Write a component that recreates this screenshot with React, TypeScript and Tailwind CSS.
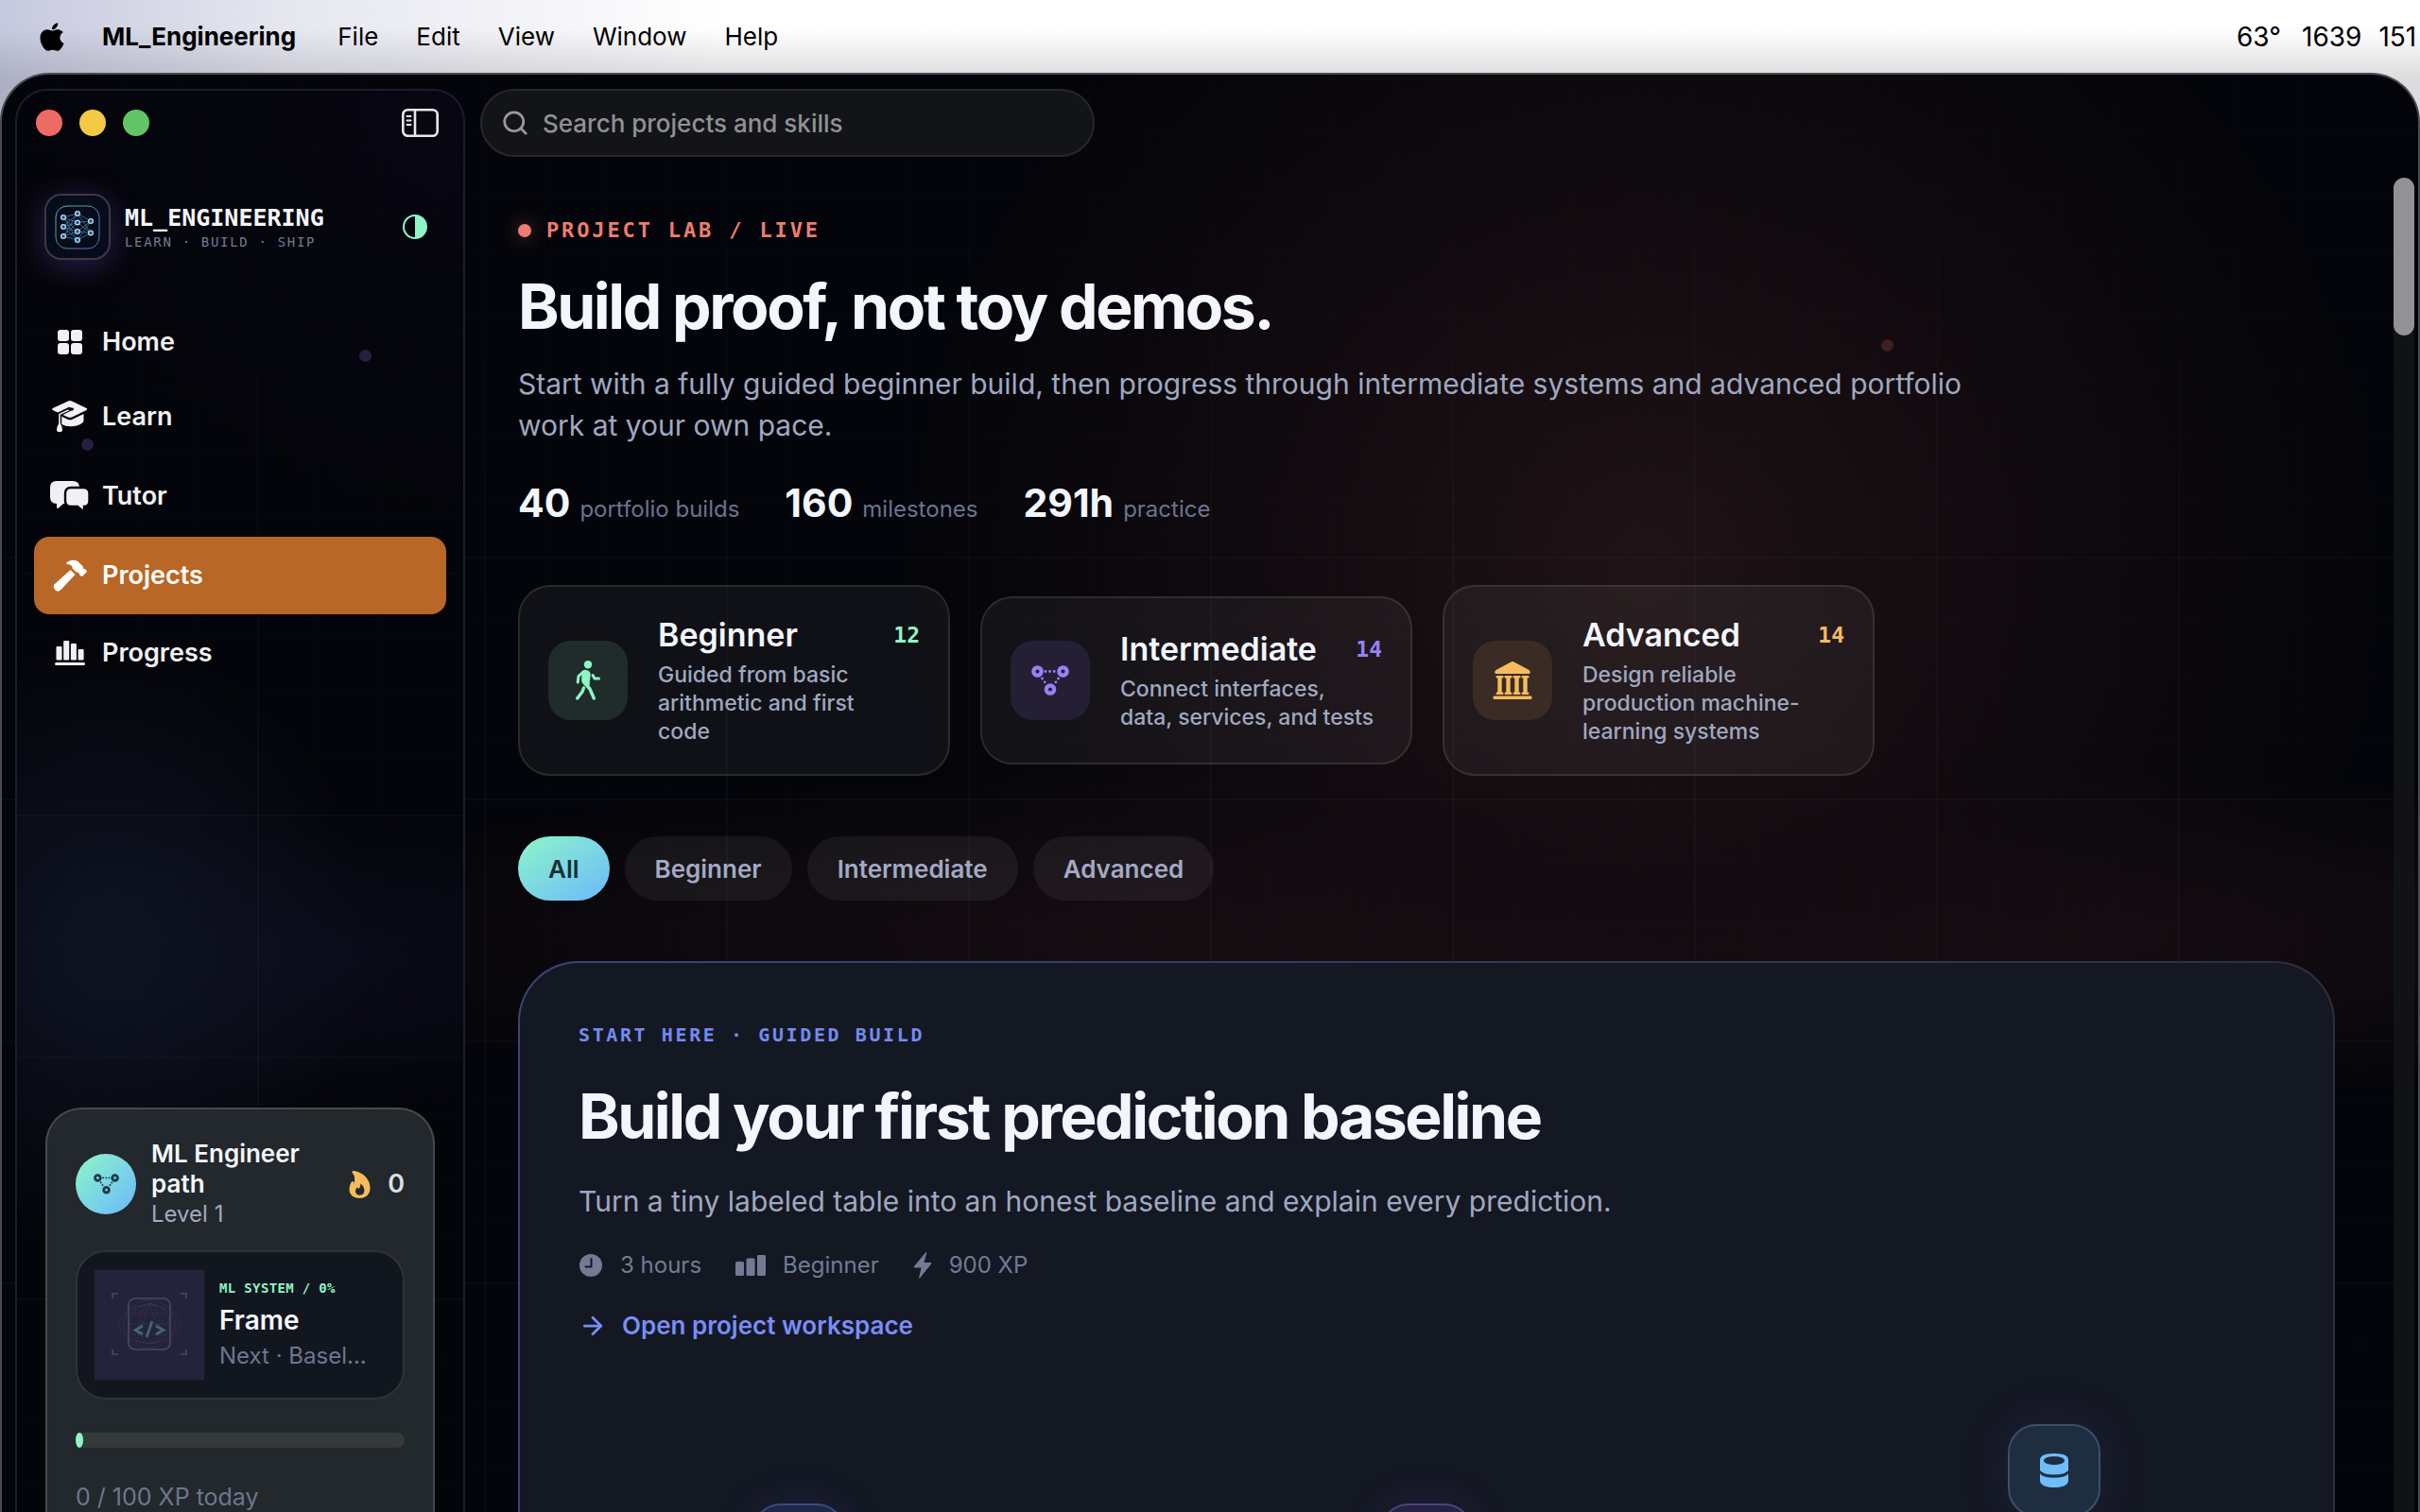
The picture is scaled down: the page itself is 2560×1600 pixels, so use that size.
import { FaApple } from "react-icons/fa";
import { ArrowRight, Search } from "lucide-react";

function HomeIcon() {
  return (
    <svg width="26" height="26" viewBox="0 0 26 26" fill="currentColor">
      <rect x="0" y="0" width="12" height="12" rx="3" />
      <rect x="14" y="0" width="12" height="12" rx="3" />
      <rect x="0" y="14" width="12" height="12" rx="3" />
      <rect x="14" y="14" width="12" height="12" rx="3" />
    </svg>
  );
}

function LearnIcon() {
  return (
    <svg width="38" height="34" viewBox="0 0 38 34" fill="currentColor">
      <path d="M17 .6q2-1 4 0l15 7.200q2.500 1.200 0 2.400l-14.500 7q-2.500 1.200-5 0L1.300 10.200q-2.400-1.200 0-2.400z" />
      <path d="M10 16.500l6.500 3.200q2.500 1 5 0L33.500 14v7q0 2-2 3-5 3.200-12 3.200-5 0-9.500-2.500z" />
      <path d="M19.500 8.600L8 14.200v10" fill="none" stroke="#04050a" strokeWidth="4.500" />
      <path d="M20 8.800L8 14.400v10" fill="none" stroke="currentColor" strokeWidth="1.600" />
      <ellipse cx="20" cy="8.900" rx="3" ry="1.600" fill="#04050a" />
      <path d="M8 23c1.500 2 3 5 3 8 0 3-6 3-6 0 0-3 1.500-6 3-8z" />
    </svg>
  );
}

function TutorIcon() {
  return (
    <svg width="42" height="32" viewBox="0 0 42 32" fill="currentColor">
      <path d="M7 0h17q7 0 7 7v10q0 7-7 7H14l-5 4.500q-2 1.200-2-1V24q-7 0-7-7V7q0-7 7-7z" />
      <path
        d="M22 7h13q6.500 0 6.500 6v8q0 6-5.500 6v3.500q0 2-2 .7L29 27h-7q-6 0-6-6v-8q0-6 6-6z"
        stroke="#04050a"
        strokeWidth="2.400"
      />
    </svg>
  );
}

function HammerIcon() {
  return (
    <svg width="36" height="34" viewBox="0 0 36 34" fill="currentColor">
      <path d="M1.400 26.500L18.500 11l5 5L8.500 32q-3 3-6 .5-3-3-1.100-6z" />
      <path d="M14.500 3.200Q20-.8 26 1.800l5.200 5q1 1.400.6 3.200 1.400-.8 2.400.2l1.300 1.500q.8 1 0 1.900l-4 4q-1 .8-2 0l-1.500-1.500q-.8-1-.2-2.200-2 .6-3.600-.8L20.500 9.500q.6-4-5.500-4.500-1.500-.6-.5-1.800z" />
    </svg>
  );
}

function ProgressIcon() {
  return (
    <svg width="32" height="26" viewBox="0 0 32 26" fill="currentColor">
      <rect x="1.500" y="6" width="6" height="14.500" rx="1" />
      <rect x="9.200" y="0" width="6" height="20.500" rx="1" />
      <rect x="16.900" y="3" width="6" height="17.500" rx="1" />
      <rect x="24.600" y="9" width="6" height="11.500" rx="1" />
      <rect x="0" y="23" width="32" height="3" rx="1.500" />
    </svg>
  );
}

function NodesIcon({ className }: { className?: string }) {
  return (
    <svg viewBox="0 0 40 32" className={className} fill="none" stroke="currentColor">
      <g strokeWidth="4.200">
        <circle cx="6.500" cy="6.500" r="4.200" />
        <circle cx="33.500" cy="6.500" r="4.200" />
        <circle cx="20" cy="25.500" r="4.200" />
      </g>
      <path d="M15 6.500h11M11.500 14l4.500 6.500M28.500 14l-4.500 6.500" strokeWidth="2.800" strokeDasharray="0 4.600" strokeLinecap="round" />
    </svg>
  );
}

function WalkIcon() {
  return (
    <svg width="26" height="42" viewBox="0 0 26 42" fill="none" stroke="currentColor" strokeLinecap="round" strokeLinejoin="round">
      <circle cx="13" cy="4.200" r="4.200" fill="currentColor" stroke="none" />
      <path d="M7 12q3-3 7 0l1 3-1 8 0 3-5-1-2-3z" fill="currentColor" stroke="currentColor" strokeWidth="1.500" />
      <path d="M8 12l-5 4.500-.8 6.500" strokeWidth="3" />
      <path d="M18 15.500l2 3.500h4.500" strokeWidth="3" />
      <path d="M10.500 25l4.500 5 4.300 10" strokeWidth="3.400" />
      <path d="M8.500 29l-1.500 4-5.300 7" strokeWidth="3.400" />
    </svg>
  );
}

function ColumnsIcon() {
  return (
    <svg width="42" height="40" viewBox="0 0 42 40" fill="currentColor">
      <path d="M19 .8q2-1.400 4 0L38.500 9q1.300 1 1.300 2.500T38 13H4q-1.800 0-1.800-1.500T3.500 9z" />
      {[3.5, 12.500, 21.500, 30.500].map((x) => (
        <g key={x}>
          <rect x={x} y="15" width="8" height="2.400" rx="1.200" />
          <rect x={x + 1.800} y="16" width="4.400" height="18" />
          <rect x={x} y="32.500" width="8" height="2.400" rx="1.200" />
        </g>
      ))}
      <rect x="0.500" y="36.600" width="41" height="3.400" rx="1.200" />
    </svg>
  );
}

function DatabaseIcon() {
  return (
    <svg width="30" height="36" viewBox="0 0 30 36" fill="currentColor">
      <path fillRule="evenodd" d="M0 7q0-7 15-7t15 7v11q-4 4.500-15 4.500T0 18zM15 3.200c-7 0-11 2-11 4.300s4 4.500 11 4.500 11-2.200 11-4.500-4-4.300-11-4.300z" />
      <path d="M0 21.500q4 4.300 15 4.300t15-4.300V29q-1 7-15 7T0 29z" />
    </svg>
  );
}

function FlameIcon() {
  return (
    <svg width="23" height="29" viewBox="0 0 23 29" fill="currentColor">
      <path
        fillRule="evenodd"
        d="M3.500.8C4 0 5 0 6.500.3 15 2 22.500 8.500 22.500 18 22.500 25 18 29 11.500 29 5 29 .5 25.200.5 19.500.5 16 2 13 3 11.500 3.800 10.500 5 11 5.200 12.200L5.500 13.500C7 8 6 4.500 3.800 2.200q-.6-.7-.3-1.400zM12.300 13.500c.3 3-.8 4.200-1.800 5.500-.6-.5-.8-1.200-1.200-1.200-1 0-2.300 2-2.300 3.700 0 2.500 2 4.200 4.600 4.200s4.800-1.700 4.800-4.700c0-3.500-1.800-6-4.100-7.500z"
      />
    </svg>
  );
}

function ClockIcon() {
  return (
    <svg width="26" height="24" viewBox="-1 0 26 24">
      <circle cx="12" cy="12" r="12" fill="currentColor" />
      <path d="M12.500 5v8.500H6.500" fill="none" stroke="#141823" strokeWidth="2" strokeLinecap="round" strokeLinejoin="round" />
    </svg>
  );
}

function LevelIcon() {
  return (
    <svg width="32" height="22" viewBox="0 0 32 22" fill="currentColor">
      <rect x="0" y="7" width="9" height="15" rx="1.500" />
      <rect x="11.500" y="3.500" width="9" height="18.500" rx="1.500" />
      <rect x="23" y="0" width="9" height="22" rx="1.500" />
    </svg>
  );
}

function BoltIcon() {
  return (
    <svg width="20" height="28" viewBox="0 0 20 28" fill="currentColor">
      <path d="M13.500 0q1 0 .7 1L11.500 11h7q1.300.3.600 1.400L7 27.500q-.8.800-.8-.5L8.500 16.500H1.300q-1-.3-.5-1.300z" />
    </svg>
  );
}

function SidebarIcon() {
  return (
    <svg width="39" height="30" viewBox="0 0 39 30" fill="none" stroke="currentColor" strokeWidth="2.600">
      <rect x="1.300" y="1.300" width="36.400" height="27.400" rx="5" />
      <path d="M14 1.500v27" />
      <path d="M5.500 8h4M5.500 12.500h4M5.500 17h4" strokeWidth="2" strokeLinecap="round" />
    </svg>
  );
}

const layers = [
  [[13, 20], [13, 30], [13, 40]],
  [[28, 16], [28, 25.500], [28, 35], [28, 44]],
  [[42, 24], [42, 36.500]],
];

function AppLogo() {
  const links = [0, 1].flatMap((i) =>
    layers[i].flatMap((a) => layers[i + 1].map((b) => ({ a, b })))
  );
  return (
    <svg width="56" height="60" viewBox="0 0 56 60" fill="none">
      <defs>
        <linearGradient id="logoStroke" x1="0" y1="0" x2="1" y2="1">
          <stop offset="0" stopColor="#6fd8b8" />
          <stop offset="0.500" stopColor="#5a9fd0" />
          <stop offset="1" stopColor="#8a6ae0" />
        </linearGradient>
      </defs>
      <rect x="5" y="8" width="46" height="45" rx="12" stroke="url(#logoStroke)" strokeWidth="1" strokeOpacity="0.850" />
      {links.map(({ a, b }, i) => (
        <path key={i} d={`M${a[0]} ${a[1]}L${b[0]} ${b[1]}`} stroke="#4f86b8" strokeWidth="0.700" />
      ))}
      {layers.flat().map(([x, y]) => (
        <circle key={`${x}-${y}`} cx={x} cy={y} r="2.400" fill="#1d4f8a" stroke="#b9dcf2" strokeWidth="1.300" />
      ))}
    </svg>
  );
}

function FrameArt() {
  return (
    <svg width="116" height="116" viewBox="0 0 116 116" fill="none" className="shrink-0 bg-[#25233c]">
      <g stroke="#4a4962" strokeWidth="1.600">
        <path d="M19 30v-5h6M91 25h6v5M97 84v5h-6M25 89h-6v-5" />
        <rect x="36" y="30" width="44" height="54" rx="7" />
      </g>
      <g stroke="#45445f" strokeWidth="1" strokeDasharray="1 2">
        <circle cx="58" cy="57" r="21" />
        <ellipse cx="58" cy="57" rx="32" ry="20" />
        <ellipse cx="58" cy="57" rx="27" ry="25" />
        <ellipse cx="58" cy="57" rx="10" ry="21" />
        <path d="M37 57h42M40 46h36M40 68h36M42 40l16-5 16 6M46 72l12-37 12 37" />
      </g>
      <path d="M51 59l-8 4.500 8 4.500M65 59l8 4.500-8 4.500M61 54l-6 17" stroke="#3f6a72" strokeWidth="2.600" />
    </svg>
  );
}

/* faint 64px grid with a stronger line every 256px */
function Grid() {
  return (
    <>
      <div className="pointer-events-none absolute -inset-0.5 bg-[linear-gradient(to_right,rgba(255,255,255,0.005)_2px,transparent_2px),linear-gradient(to_bottom,rgba(255,255,255,0.005)_2px,transparent_2px)] bg-[size:64px_64px]" />
      <div className="pointer-events-none absolute -inset-0.5 bg-[linear-gradient(to_right,rgba(255,255,255,0.022)_2px,transparent_2px),linear-gradient(to_bottom,rgba(255,255,255,0.022)_2px,transparent_2px)] bg-[size:256px_256px] mask-[linear-gradient(to_bottom,transparent,black_48%)]" />
    </>
  );
}

const navItems = [
  { label: "Home", icon: <HomeIcon />, row: "h-[76px]" },
  { label: "Learn", icon: <LearnIcon />, row: "h-[82px]" },
  { label: "Tutor", icon: <TutorIcon />, row: "h-[86px]" },
  { label: "Projects", icon: <HammerIcon />, row: "h-[82px]", active: true },
  { label: "Progress", icon: <ProgressIcon />, row: "h-[82px]" },
];

const stats = [
  { value: "40", label: "portfolio builds" },
  { value: "160", label: "milestones" },
  { value: "291h", label: "practice" },
];

const tracks = [
  {
    name: "Beginner",
    count: 12,
    text: "Guided from basic\narithmetic and first\ncode",
    icon: <WalkIcon />,
    tile: "bg-[#1f2c2a] text-[#8ff5c6]",
    color: "text-[#8ff5c6]",
  },
  {
    name: "Intermediate",
    count: 14,
    text: "Connect interfaces,\ndata, services, and tests",
    icon: <NodesIcon className="w-10" />,
    tile: "bg-[#241f34] text-[#9a80f5]",
    color: "text-[#9a80f5]",
  },
  {
    name: "Advanced",
    count: 14,
    text: "Design reliable\nproduction machine-\nlearning systems",
    icon: <ColumnsIcon />,
    tile: "bg-[#3a2b25] text-[#f5bb5c]",
    color: "text-[#f5bb5c]",
  },
];

const filters = ["All", "Beginner", "Intermediate", "Advanced"];

function MenuBar() {
  return (
    <header className="flex h-[77px] shrink-0 items-center justify-between overflow-hidden pl-[38px] text-[26px] text-black">
      <nav className="flex items-center">
        <FaApple className="mr-9 size-[34px]" />
        <button className="mr-11 font-bold">ML_Engineering</button>
        <div className="flex gap-10">
          <button>File</button>
          <button>Edit</button>
          <button>View</button>
          <button>Window</button>
          <button>Help</button>
        </div>
      </nav>
      <div className="flex w-[194px] shrink-0 gap-[18px] whitespace-nowrap text-[28px]">
        <span className="mr-1">63°</span>
        <span>1639</span>
        <span>151</span>
      </div>
    </header>
  );
}

function Sidebar() {
  return (
    <aside className="relative flex w-[476px] shrink-0 flex-col overflow-hidden rounded-t-[34px] border-2 border-b-0 border-[#1d1c2c] bg-[#04050a] bg-[radial-gradient(circle_at_100%_0%,#070612_0%,transparent_460px),radial-gradient(ellipse_280px_320px_at_20%_60%,#0f1424_0%,transparent_100%),radial-gradient(ellipse_400px_160px_at_70%_61%,#0b0b1a_0%,transparent_100%)]">
      <Grid />
      <span className="absolute left-[362px] top-[274px] size-[13px] rounded-full bg-[#251f40]" />
      <span className="absolute left-[68px] top-[368px] size-[13px] rounded-full bg-[#251f40]" />

      {/* Window controls */}
      <div className="relative flex h-[68px] items-center justify-between pl-5 pr-[26px]">
        <div className="flex gap-[18px]">
          <button aria-label="Close" className="size-7 rounded-full bg-[#ed6a66]" />
          <button aria-label="Minimize" className="size-7 rounded-full bg-[#f4c944]" />
          <button aria-label="Zoom" className="size-7 rounded-full bg-[#62c466]" />
        </div>
        <button aria-label="Toggle sidebar" className="text-[#e8e8ea]">
          <SidebarIcon />
        </button>
      </div>

      {/* Brand */}
      <div className="relative mt-[41px] flex items-center pl-[29px] pr-[38px]">
        <div className="flex size-[70px] items-center justify-center rounded-[18px] border-2 border-[#3a3a4a] bg-[#060c1a] shadow-[0_6px_32px_rgba(120,90,220,0.32)]">
          <AppLogo />
        </div>
        <div className="ml-[15px] flex-1 pt-[3px]">
          <div className="font-['DejaVu_Sans_Mono',monospace] text-[25px] font-bold leading-7 text-[#f3f6ff]">ML_ENGINEERING</div>
          <div className="font-['DejaVu_Sans_Mono',monospace] text-[14px] leading-[22px] tracking-[0.12em] text-[#737a91]">LEARN · BUILD · SHIP</div>
        </div>
        <button aria-label="Switch theme" className="size-[26px] rounded-full border-2 border-[#8ff5c6] bg-[linear-gradient(to_right,transparent_50%,#8ff5c6_50%)]" />
      </div>

      <nav className="relative mt-[49px] flex flex-col px-[18px]">
        {navItems.map((item) => (
          <a
            key={item.label}
            href="#"
            className={`flex items-center rounded-2xl pl-4 text-[27px] font-semibold ${item.row} ${
              item.active ? "bg-[#b96726] text-white" : "text-[#f1f1f3]"
            }`}
          >
            <span className="mr-3 flex w-11 justify-center">{item.icon}</span>
            {item.label}
          </a>
        ))}
      </nav>

      <div className="flex-1" />

      {/* Learner card */}
      <section className="relative mx-[30px] h-[428px] shrink-0 rounded-t-[38px] border-2 border-b-0 border-[#454b4d] bg-[#22282b] px-[30px] pt-[31px]">
        <div className="flex items-center">
          <div className="flex size-16 shrink-0 items-center justify-center rounded-full bg-linear-to-br from-[#8ff5c6] to-[#6cb8fa] text-[#1d3a44]">
            <NodesIcon className="w-[27px]" />
          </div>
          <div className="ml-4 flex-1 leading-8">
            <div className="w-40 text-[26px] font-semibold text-[#f3f6ff]">ML Engineer path</div>
            <div className="text-[24px] text-[#a3a9c2]">Level 1</div>
          </div>
          <span className="text-[#f5bb5c]">
            <FlameIcon />
          </span>
          <span className="ml-[18px] text-[27px] font-semibold text-[#dddfe2]">0</span>
        </div>

        <div className="mt-[22px] flex h-[158px] items-center overflow-hidden rounded-[32px] border-2 border-[#2f3439] bg-[#12161f] px-[18px]">
          <FrameArt />
          <div className="ml-4 min-w-0">
            <div className="whitespace-nowrap font-['DejaVu_Sans_Mono',monospace] text-[14px] font-bold leading-5 tracking-wide text-[#8ff5c6]">ML SYSTEM / 0%</div>
            <div className="mt-[6px] text-[28px] font-semibold leading-9 text-[#f3f6ff]">Frame</div>
            <div className="mt-1 truncate text-[24px] leading-8 text-[#6e7691]">Next · Basel...</div>
          </div>
        </div>

        <div className="mt-[35px] h-4 rounded-full bg-[#34393b]">
          <div className="h-4 w-2 rounded-[50%] bg-[#8ff5c6]" />
        </div>
        <p className="mt-9 text-[25px] leading-8 text-[#6e7691]">0 / 100 XP today</p>
      </section>
    </aside>
  );
}

function Tracks() {
  return (
    <div className="mt-[62px] flex items-center gap-8">
      {tracks.map((track) => (
        <article
          key={track.name}
          className="flex min-h-[178px] w-[457px] items-center rounded-[34px] border-2 border-white/10 bg-white/5 px-[30px] py-[30px]"
        >
          <div className={`flex size-[84px] shrink-0 items-center justify-center rounded-3xl ${track.tile}`}>
            {track.icon}
          </div>
          <div className="ml-8 flex-1">
            <div className="flex items-center justify-between">
              <h3 className="text-[34px] font-semibold leading-[42px] text-[#f3f6ff]">{track.name}</h3>
              <span className={`font-['DejaVu_Sans_Mono',monospace] text-[23px] font-bold ${track.color}`}>{track.count}</span>
            </div>
            <p className="mt-[6px] whitespace-pre-line text-[23px] font-medium leading-[30px] text-[#a0a8c0]">{track.text}</p>
          </div>
        </article>
      ))}
    </div>
  );
}

function GuidedBuild() {
  return (
    <section className="mt-16 h-[900px] rounded-[64px] bg-linear-to-r from-[#3b4475] to-[#302d3e] p-[2px]">
      <div className="h-full rounded-[62px] bg-[#141823] px-[62px] pt-[62px]">
        <div className="font-['DejaVu_Sans_Mono',monospace] text-[20px] font-bold leading-7 tracking-[0.13em] text-[#738bf0]">
          START HERE · GUIDED BUILD
        </div>
        <h2 className="mt-8 text-[66px] font-bold leading-[80px] tracking-[-0.037em] text-[#f3f6ff]">
          Build your first prediction baseline
        </h2>
        <p className="mt-7 text-[30px] leading-[44px] text-[#a0a8c0]">
          Turn a tiny labeled table into an honest baseline and explain every prediction.
        </p>
        <div className="mt-[30px] flex text-[24px] leading-8 text-[#737b94]">
          <span className="flex items-center gap-[18px]">
            <ClockIcon /> 3 hours
          </span>
          <span className="ml-9 flex items-center gap-[18px]">
            <LevelIcon /> Beginner
          </span>
          <span className="ml-9 flex items-center gap-[18px]">
            <BoltIcon /> 900 XP
          </span>
        </div>
        <a href="#" className="mt-8 flex items-center gap-4 text-[26px] font-semibold leading-8 text-[#7a8df7]">
          <ArrowRight size={30} strokeWidth={2.200} /> Open project workspace
        </a>

        {/* Build steps, zig-zag */}
        <div className="mt-[88px] flex items-start justify-between px-[184px]">
          <div className="mt-[84px] size-[98px] rounded-[30px] border-2 border-[#3c4a7c] bg-[#1e2744] shadow-[0_0_40px_rgba(90,80,200,0.15)]" />
          <div className="mt-[84px] size-[98px] rounded-[30px] border-2 border-[#4a4376] bg-[#262242] shadow-[0_0_40px_rgba(120,80,220,0.15)]" />
          <div className="flex size-[98px] items-center justify-center rounded-[30px] border-2 border-[#38506c] bg-[#1f2d40] text-[#6fbdfa] shadow-[0_0_50px_rgba(90,80,160,0.15)]">
            <DatabaseIcon />
          </div>
        </div>
      </div>
    </section>
  );
}

export default function App() {
  return (
    <div className="flex h-screen flex-col overflow-hidden bg-white bg-[linear-gradient(to_bottom,transparent_30px,rgba(60,60,70,0.18)_84px),linear-gradient(to_right,#c6c9de_0%,#e6e7f0_12%,#ffffff_30%)] font-['Inter',sans-serif]">
      <MenuBar />

      <div className="relative flex min-h-0 flex-1 overflow-hidden rounded-t-[52px] border-2 border-b-0 border-[#4a4b4f] bg-[#04050a] bg-[radial-gradient(ellipse_780px_760px_at_68%_34%,#1f1316_0%,#120b0f_45%,transparent_100%),radial-gradient(ellipse_1500px_190px_at_66%_60%,#1d1014_0%,transparent_100%)] pl-[14px] pt-[15px]">
        <Grid />
        <span className="absolute left-[1988px] top-[280px] size-[13px] rounded-full bg-[#3f2022]" />

        <Sidebar />

        <main className="relative flex min-w-0 flex-1 flex-col">
          <label className="ml-4 flex h-[72px] w-[650px] shrink-0 items-center gap-[14px] rounded-full border-2 border-[#27272e] bg-[#131418] pl-5 text-[#98989c]">
            <Search size={30} strokeWidth={2.200} />
            <input
              type="text"
              aria-label="Search projects and skills"
              placeholder="Search projects and skills"
              className="flex-1 bg-transparent text-[26px] font-medium outline-none placeholder:text-[#919195]"
            />
          </label>

          <div className="flex min-h-0 flex-1">
            <div className="min-w-0 flex-1 pl-14 pr-[62px] pt-16">
              <div className="flex items-center font-['DejaVu_Sans_Mono',monospace] text-[22px] font-bold leading-7 tracking-[0.13em] text-[#ee7c70]">
                <span className="mr-4 size-[14px] rounded-full bg-[#ee7c70] shadow-[0_0_20px_rgba(238,124,112,0.5)]" />
                PROJECT LAB / LIVE
              </div>
              <h1 className="mt-[26px] text-[66px] font-bold leading-[80px] tracking-[-0.037em] text-[#f3f6ff]">
                Build proof, not toy demos.
              </h1>
              <p className="mt-5 max-w-[1560px] text-[30px] leading-[44px] text-[#a0a8c0]">
                Start with a fully guided beginner build, then progress through intermediate systems and advanced portfolio work at your own pace.
              </p>
              <div className="mt-9 flex gap-12">
                {stats.map((stat) => (
                  <div key={stat.label} className="flex items-baseline gap-[10px]">
                    <span className="text-[41px] font-bold leading-[48px] text-[#f3f6ff]">{stat.value}</span>
                    <span className="text-[24px] text-[#6b7390]">{stat.label}</span>
                  </div>
                ))}
              </div>

              <Tracks />

              <div className="mt-16 flex gap-4">
                {filters.map((name, i) => (
                  <button
                    key={name}
                    className={`h-[68px] rounded-full px-8 text-[26px] font-semibold ${
                      i === 0 ? "bg-linear-to-br from-[#8ff5c6] to-[#6cb8fa] text-[#153038]" : "bg-white/6 text-[#a3aac4]"
                    }`}
                  >
                    {name}
                  </button>
                ))}
              </div>

              <GuidedBuild />
            </div>

            {/* Scrollbar */}
            <div className="mr-1 mt-[22px] w-[22px] shrink-0 rounded-t-full bg-[#111215]">
              <div className="h-[167px] rounded-full bg-[#929294]" />
            </div>
          </div>
        </main>
      </div>
    </div>
  );
}
